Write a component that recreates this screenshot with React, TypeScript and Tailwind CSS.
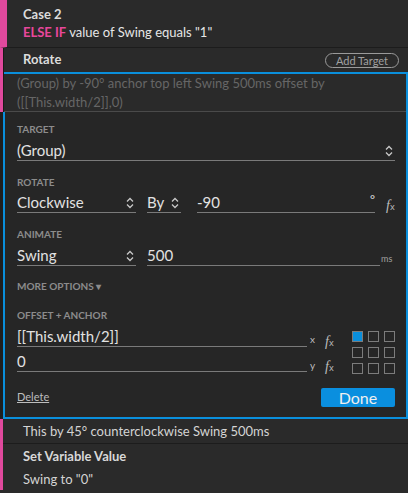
import React from "react";

const font = { fontFamily: "Lato, 'Open Sans', sans-serif" };

function UpDown() {
    return (
        <svg width="8" height="12" viewBox="0 0 8 12" fill="none" stroke="#c8c8c8" strokeWidth="1.3">
            <path d="M1 4.5 L4 1.5 L7 4.5" />
            <path d="M1 7.5 L4 10.5 L7 7.5" />
        </svg>
    );
}

function Fx() {
    return (
        <span className="block text-[14px] italic leading-[14px] text-[#bdbdbd]" style={{ fontFamily: "'Liberation Serif', serif" }}>
            f<span className="text-[9px] not-italic font-sans">x</span>
        </span>
    );
}

function Label({ children, className = "" }: { children: React.ReactNode; className?: string }) {
    return <div className={"h-[12px] text-[10px] font-bold leading-[12px] uppercase text-[#8c8c8c] " + className}>{children}</div>;
}

function Select({ value, className = "" }: { value: string; className?: string }) {
    return (
        <div className={"flex h-[20px] items-center justify-between border-b border-[#7a7a7a] pr-[2px] text-[15px] leading-[19px] text-[#e2e2e2] " + className}>
            <span>{value}</span>
            <UpDown />
        </div>
    );
}

export default function App() {
    return (
        <div className="w-[408px] h-[493px] overflow-hidden bg-[#2a2a2a] text-[#e0e0e0]" style={font}>
            {/* case header */}
            <div className="h-[48px] border-l-[7px] border-[#e0499d] border-b border-b-[#1c1c1c] pl-[16px] pt-[5px]">
                <div className="text-[13px] font-bold leading-[18px] text-[#dcdcdc]">Case 2</div>
                <div className="text-[13px] leading-[19px] text-[#e6e6e6]">
                    <span className="font-bold text-[#e8479c]">ELSE IF</span> value of Swing equals "1"
                </div>
            </div>

            <div className="border-l-[3px] border-[#e0499d]">
                <div className="border-l border-[#1a1a1a]">
                    {/* action header */}
                    <div className="flex h-[24px] items-center justify-between pl-[19px] pr-[9px]">
                        <span className="text-[13px] font-bold text-[#dcdcdc]">Rotate</span>
                        <button className="h-[15px] w-[74px] rounded-full border border-[#9a9a9a] text-[11px] leading-[13px] text-[#a0a0a0]">
                            Add Target
                        </button>
                    </div>

                    <div className="border-t-2 border-[#0a8fdc] border-r-2 border-r-[#0a8fdc]">
                        {/* summary */}
                        <div className="h-[38px] border-b border-[#4a4a4a] pl-[13px] text-[13px] leading-[19px] text-[#666666]">
                            (Group) by -90° anchor top left Swing 500ms offset by
                            <br />
                            ([[This.width/2]],0)
                        </div>
                    </div>
                </div>
            </div>

            {/* edit panel */}
            <div className="flex">
                <div className="w-[3px] bg-[#1f1f1f]" />
                <div className="flex-1 h-[307px] border-l-2 border-r-2 border-b-2 border-[#0a8fdc] bg-[#262626] pl-[12px] pr-[11px] pt-[11px]">
                    <Label>Target</Label>
                    <Select value="(Group)" className="mt-[6px] h-[19px]" />

                    <Label className="mt-[15px]">Rotate</Label>
                    <div className="mt-[5px] flex h-[20px] items-end leading-none">
                        <Select value="Clockwise" className="w-[119px]" />
                        <Select value="By" className="ml-[11px] w-[34px]" />
                        <div className="ml-[16px] flex h-[20px] w-[178px] items-center justify-between border-b border-[#7a7a7a] text-[15px] leading-[19px] text-[#e2e2e2]">
                            <span>-90</span>
                            <span className="pb-[5px] text-[12px] leading-none">°</span>
                        </div>
                        <div className="ml-[11px] mb-[-1px]">
                            <Fx />
                        </div>
                    </div>

                    <Label className="mt-[15px]">Animate</Label>
                    <div className="mt-[6px] flex h-[20px] items-end leading-none">
                        <Select value="Swing" className="w-[119px]" />
                        <div className="ml-[11px] flex h-[20px] w-[233px] items-center border-b border-[#7a7a7a] text-[15px] leading-[19px] text-[#e2e2e2]">
                            500
                        </div>
                        <span className="ml-[1px] mb-[3px] text-[9px] leading-none text-[#a0a0a0]">ms</span>
                    </div>

                    <Label className="mt-[14px]">More options ▾</Label>

                    <Label className="mt-[17px]">Offset + Anchor</Label>
                    <div className="mt-[6px] flex leading-none">
                        <div className="flex flex-col gap-[5px]">
                            <div className="flex h-[20px] items-end">
                                <div className="flex h-[20px] w-[290px] items-center border-b border-[#7a7a7a] text-[15px] leading-[19px] text-[#e2e2e2]">
                                    [[This.width/2]]
                                </div>
                                <span className="mb-[3px] w-[18px] pl-[3px] text-[10px] leading-none text-[#bdbdbd]">x</span>
                                <span className="w-[27px] mb-[-3px]">
                                    <Fx />
                                </span>
                            </div>
                            <div className="flex h-[20px] items-end">
                                <div className="flex h-[20px] w-[290px] items-center border-b border-[#7a7a7a] text-[15px] leading-[19px] text-[#e2e2e2]">
                                    0
                                </div>
                                <span className="mb-[2px] w-[18px] pl-[3px] text-[10px] leading-none text-[#bdbdbd]">y</span>
                                <span className="w-[27px] mb-[-3px]">
                                    <Fx />
                                </span>
                            </div>
                        </div>
                        <div className="mt-[4px] grid grid-cols-3 gap-[5px] self-start">
                            {Array.from({ length: 9 }).map((_, i) => (
                                <div
                                    key={i}
                                    className={
                                        "h-[11px] w-[11px] border-[1.5px] border-[#7c7c7c] " +
                                        (i === 0 ? "bg-[#0a8fdc]" : "bg-transparent")
                                    }
                                />
                            ))}
                        </div>
                    </div>

                    <div className="mt-[14px] flex items-center justify-between">
                        <span className="text-[11px] text-[#bdbdbd] underline">Delete</span>
                        <button className="h-[19px] w-[74px] rounded-[2px] bg-[#0a8fdf] text-[16px] leading-[19px] text-[#f0f0f0]">
                            Done
                        </button>
                    </div>
                </div>
            </div>

            {/* following actions */}
            <div className="border-l-[3px] border-[#e0499d]">
                <div className="flex h-[25px] items-center border-b border-[#1c1c1c] pl-[20px] pt-[1px] text-[13px] text-[#d4d4d4]">
                    This by 45° counterclockwise Swing 500ms
                </div>
                <div className="flex h-[24px] items-center pl-[20px] pt-[1px] text-[13px] font-bold text-[#d8d8d8]">
                    Set Variable Value
                </div>
                <div className="flex h-[22px] items-center pl-[20px] pt-[2px] text-[13px] text-[#d4d4d4]">
                    Swing to "0"
                </div>
            </div>
        </div>
    );
}
